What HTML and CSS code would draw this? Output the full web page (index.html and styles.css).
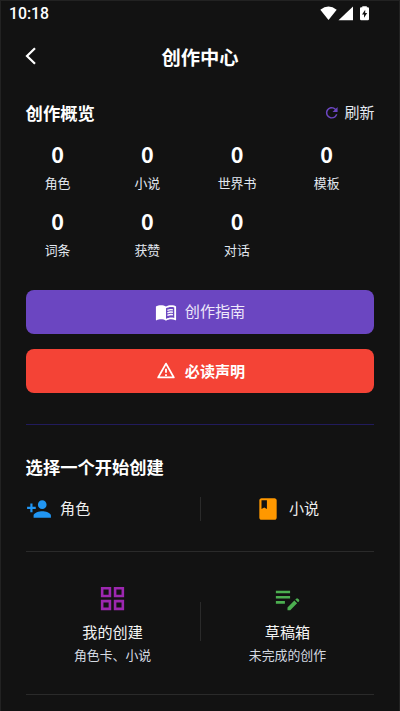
FILE: index.html
```html
<!DOCTYPE html>
<html lang="zh-CN">
<head>
<meta charset="utf-8">
<title>创作中心</title>
<link rel="stylesheet" href="styles.css">
</head>
<body>
<div class="screen">
  <div class="status">
    <span class="time">10:18</span>
    <svg class="status-icons" width="50" height="16" viewBox="0 0 50 16" fill="#fff">
      <path d="M.3 3.8Q8.500-2.600 16.700 3.800L8.500 14z"/>
      <path d="M33 .4V14.300H18.500z"/>
      <path fill-rule="evenodd" d="M42.300 1.200V.2h4.500v1h1q1.200 0 1.200 1.200v10.700q0 1.200-1.200 1.200h-6.600q-1.200 0-1.200-1.200V2.400q0-1.200 1.200-1.200zM45.200 3.800l-3.200 4.700h2v3.300l3.200-4.700h-2z"/>
    </svg>
  </div>
  <header class="appbar">
    <svg class="back" width="12" height="18" viewBox="0 0 12 18" fill="none" stroke="#fff" stroke-width="2.200"><path d="M10 1.200L2 9l8 7.800"/></svg>
    <h1>创作中心</h1>
  </header>
  <main>
    <div class="section-head">
      <h2>创作概览</h2>
      <div class="refresh">
        <svg width="17.500" height="17.500" viewBox="0 0 24 24" fill="#6b46c1"><path d="M17.650 6.350A7.958 7.958 0 0012 4c-4.420 0-7.990 3.580-7.990 8s3.570 8 7.990 8c3.730 0 6.840-2.550 7.730-6h-2.080A5.990 5.990 0 0112 18c-3.310 0-6-2.690-6-6s2.690-6 6-6c1.660 0 3.140.69 4.220 1.780L13 11h7V4z"/></svg>
        <span>刷新</span>
      </div>
    </div>
    <div class="stats">
      <div class="stat"><b>0</b><span>角色</span></div>
      <div class="stat"><b>0</b><span>小说</span></div>
      <div class="stat"><b>0</b><span>世界书</span></div>
      <div class="stat"><b>0</b><span>模板</span></div>
      <div class="stat"><b>0</b><span>词条</span></div>
      <div class="stat"><b>0</b><span>获赞</span></div>
      <div class="stat"><b>0</b><span>对话</span></div>
    </div>
    <div class="button guide">
      <svg width="22" height="22" viewBox="0 0 24 24" fill="#fff"><path d="M21 5c-1.110-.35-2.330-.5-3.500-.5-1.950 0-4.050.4-5.500 1.500-1.450-1.100-3.550-1.500-5.500-1.500S2.450 4.900 1 6v14.650c0 .25.25.5.5.5.1 0 .15-.05.25-.05C3.100 20.450 5.050 20 6.500 20c1.950 0 4.050.4 5.500 1.500 1.350-.85 3.800-1.500 5.500-1.500 1.650 0 3.350.3 4.750 1.050.1.05.15.05.25.05.25 0 .5-.25.5-.5V6c-.6-.45-1.250-.75-2-1zm0 13.500c-1.100-.35-2.300-.5-3.500-.5-1.700 0-4.150.65-5.500 1.500V8c1.350-.85 3.800-1.500 5.500-1.500 1.200 0 2.400.15 3.500.5v11.500z"/><path d="M13.500 10.200q3-1.300 6-.6M13.500 12.900q3-1.300 6-.6M13.500 15.600q3-1.300 6-.6" fill="none" stroke="#fff" stroke-width="1.500"/></svg>
      <span>创作指南</span>
    </div>
    <div class="button notice">
      <svg width="22" height="22" viewBox="0 0 24 24" fill="none" stroke="#fff" stroke-width="2" stroke-linejoin="round"><path d="M12 4L20.500 19h-17z"/><path d="M12 9.500v4.500M12 15.500v2"/></svg>
      <span>必读声明</span>
    </div>
    <hr class="accent">
    <h2 class="choose">选择一个开始创建</h2>
    <div class="pair create">
      <div class="option">
        <svg width="26" height="26" viewBox="0 0 24 24" fill="#2196f3"><path d="M15 12c2.210 0 4-1.790 4-4s-1.790-4-4-4-4 1.790-4 4 1.790 4 4 4zm-9-2V7H4v3H1v2h3v3h2v-3h3v-2H6zm9 4c-2.670 0-8 1.340-8 4v2h16v-2c0-2.660-5.330-4-8-4z"/></svg>
        <span>角色</span>
      </div>
      <div class="divider"></div>
      <div class="option novel">
        <svg width="26" height="26" viewBox="0 0 24 24" fill="#ff9800"><path d="M18 2H6c-1.100 0-2 .9-2 2v16c0 1.100.9 2 2 2h12c1.100 0 2-.9 2-2V4c0-1.100-.9-2-2-2zM6 4h5v8l-2.500-1.500L6 12V4z"/></svg>
        <span>小说</span>
      </div>
    </div>
    <hr>
    <div class="pair library">
      <div class="entry">
        <svg width="31" height="31" viewBox="0 0 24 24" fill="#9c27b0"><path d="M3 3v8h8V3H3zm6 6H5V5h4v4zm-6 4v8h8v-8H3zm6 6H5v-4h4v4zm4-16v8h8V3h-8zm6 6h-4V5h4v4zm-6 4v8h8v-8h-8zm6 6h-4v-4h4v4z"/></svg>
        <strong>我的创建</strong>
        <small>角色卡、小说</small>
      </div>
      <div class="divider"></div>
      <div class="entry">
        <svg width="31" height="31" viewBox="0 0 24 24" fill="#4caf50"><path d="M3 10h11v2H3v-2zm0-2h11V6H3v2zm0 8h7v-2H3v2zm15.010-3.130l.71-.71a.996.996 0 011.410 0l.71.71c.39.39.39 1.020 0 1.410l-.71.71-2.120-2.120zm-.71.710l-5.300 5.300V21h2.120l5.300-5.300-2.120-2.120z"/></svg>
        <strong>草稿箱</strong>
        <small>未完成的创作</small>
      </div>
    </div>
    <hr>
  </main>
</div>
</body>
</html>
```
FILE: styles.css
```css
* { box-sizing: border-box; }
body { margin: 0; background: #121212; color: #fff; font-family: Roboto, "Noto Sans CJK SC", sans-serif; }
.screen { height: 711px; overflow: hidden; border: solid #222; border-width: 1px 1px 0; }
svg { display: block; flex: none; }
h1, h2 { margin: 0; font-weight: 700; white-space: nowrap; }
.status { height: 26px; padding: 0 29px 0 8px; display: flex; justify-content: space-between; align-items: center; }
.time { font-size: 15.800px; font-weight: 500; line-height: 26px; }
.status-icons { margin-bottom: 1px; }
.appbar { height: 60px; padding: 0 24.200px; display: grid; grid-template-columns: 1fr auto 1fr; align-items: center; }
.appbar h1 { font-size: 19.300px; line-height: 28px; padding-top: 3px; }
.back { margin-bottom: 3px; }
main { padding: 12px 24.600px 0; }
.section-head { display: flex; justify-content: space-between; align-items: center; height: 28px; }
h2 { font-size: 17.300px; line-height: 28px; }
.section-head h2 { padding-top: 1px; }
.refresh { display: flex; align-items: center; gap: 4px; font-size: 15px; line-height: 24px; color: #e2e8f0; }
.stats { display: grid; grid-template-columns: repeat(4, 64px); column-gap: 25.700px; row-gap: 11px; margin-top: 14px; }
.stat { display: flex; flex-direction: column; align-items: center; height: 56px; }
.stat b { font: 700 21.500px/26px "Noto Sans CJK SC", sans-serif; }
.stat span { font-size: 12.900px; line-height: 20px; margin-top: 7px; color: #e2e8f0; }
.button { display: flex; align-items: center; justify-content: center; gap: 8px; height: 44px; border-radius: 8px; font-size: 15.100px; line-height: 22px; }
.button span { padding-top: 1px; }
.guide { background: #6b46c1; margin-top: 25.500px; color: #eee8fa; }
.notice { background: #f44336; margin-top: 15.500px; font-weight: 700; }
hr { border: 0; height: 1px; margin: 0; background: #2a2a2a; }
hr.accent { margin-top: 30.500px; background: #211b5c; }
.choose { margin-top: 29.500px; }
.pair { display: grid; grid-template-columns: 1fr 1px 1fr; align-items: center; }
.divider { background: #2a2a2a; }
.create { height: 69px; padding-bottom: 16px; }
.create .divider { height: 24px; }
.option { display: flex; align-items: center; gap: 8.500px; font-size: 15.100px; line-height: 22px; color: #eee; }
.novel { padding-left: 54px; }
.library { height: 142px; padding-top: 2px; }
.library .divider { height: 39px; margin-top: -6px; }
.entry { display: flex; flex-direction: column; align-items: center; }
.entry strong { font-size: 15.100px; line-height: 24px; font-weight: 400; margin-top: 7px; color: #f4f4f4; }
.entry small { font-size: 12.900px; line-height: 20px; margin-top: 1px; color: #d5dae2; }
```
